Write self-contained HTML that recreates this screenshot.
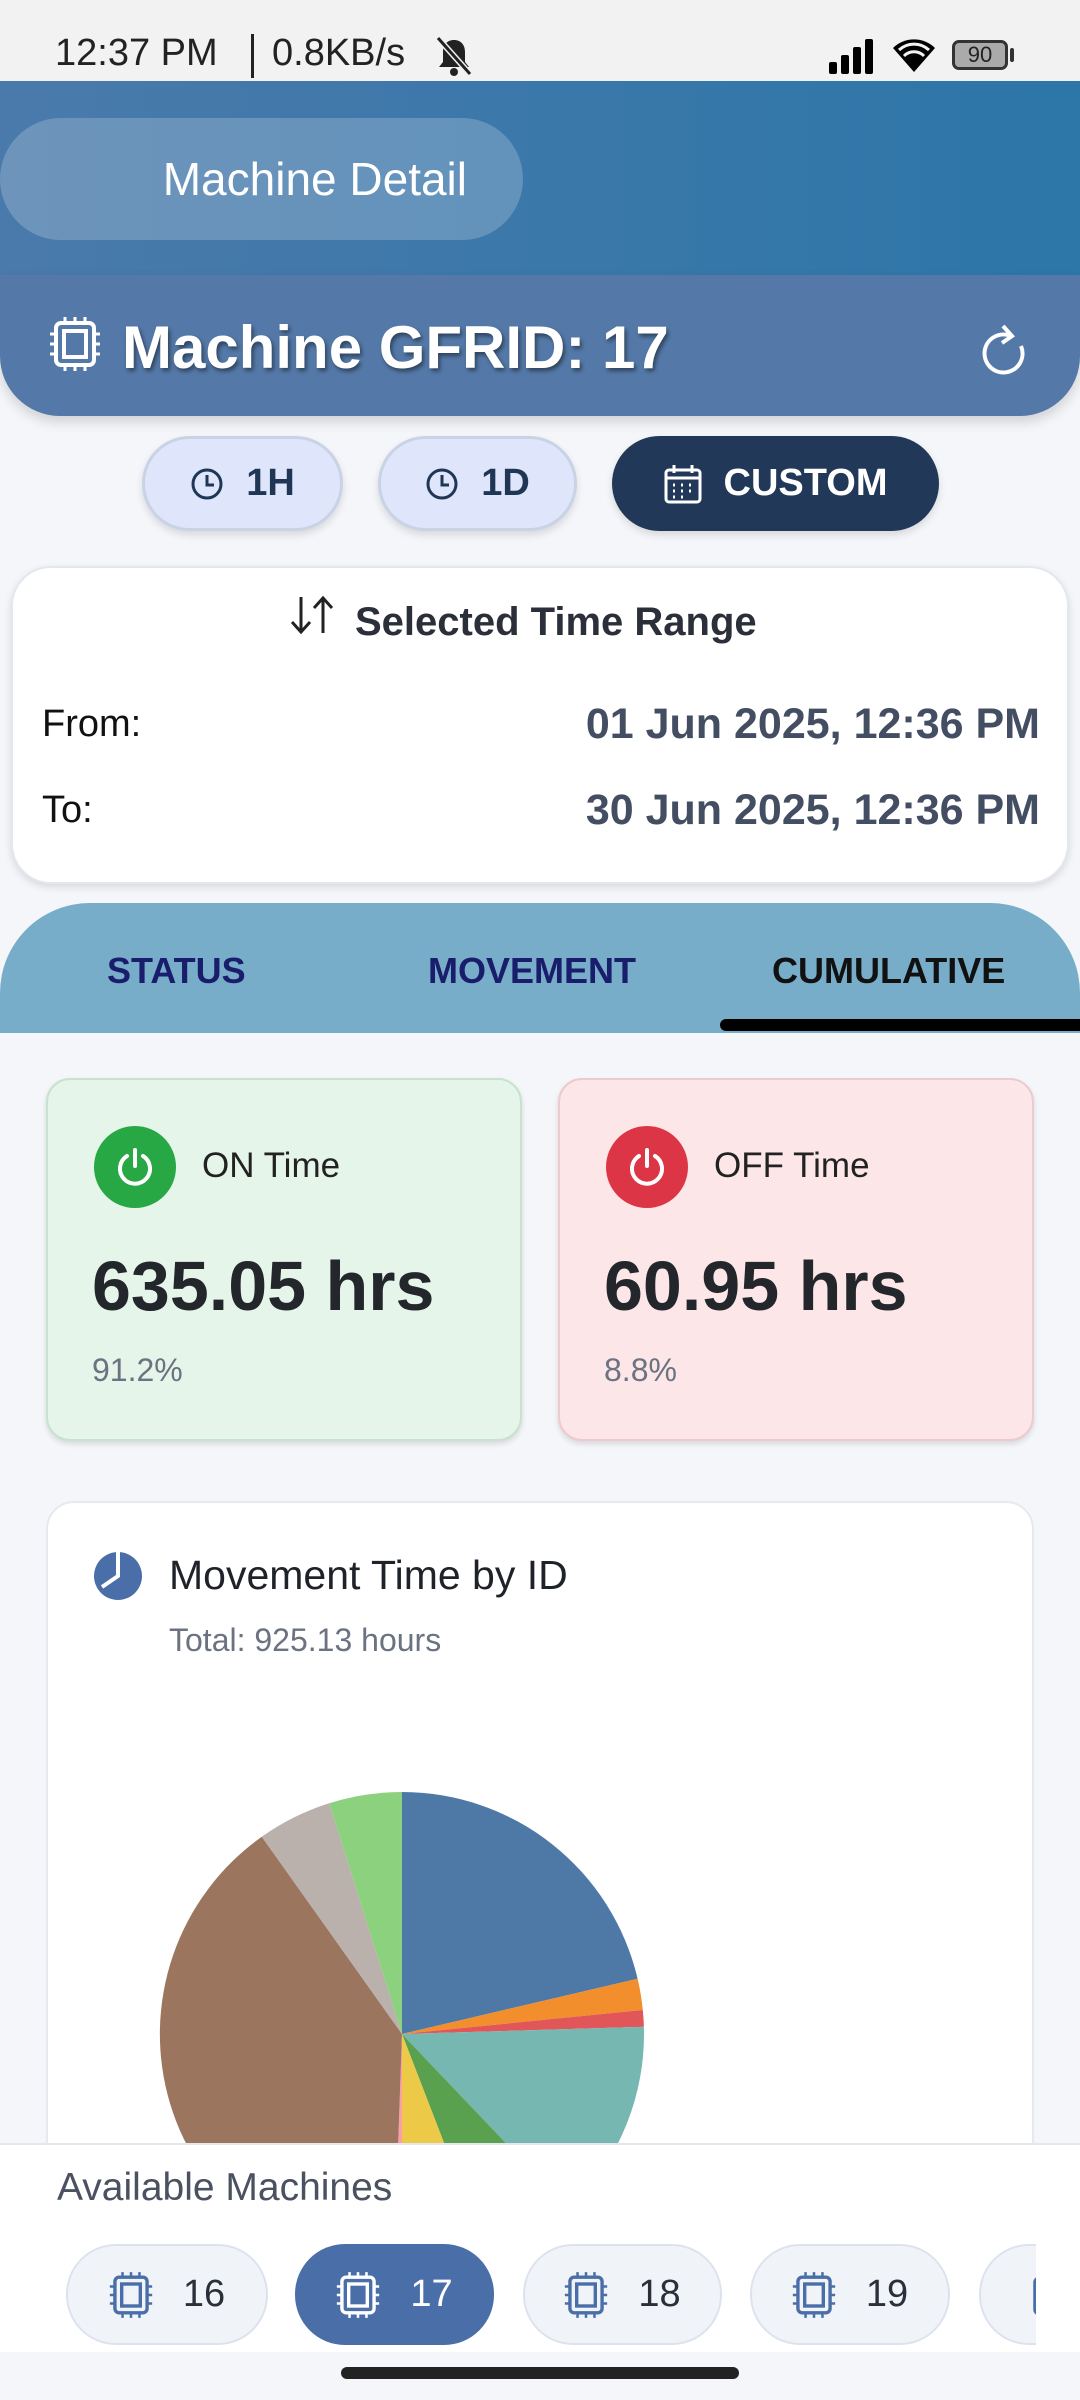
<!DOCTYPE html>
<html><head><meta charset="utf-8"><style>
*{margin:0;padding:0;box-sizing:border-box}
body{width:1080px;height:2400px;position:relative;overflow:hidden;background:#f4f6fa;font-family:"Liberation Sans",sans-serif;color:#1f2329}
.a{position:absolute}
.sb{top:0;left:0;width:1080px;height:81px;background:#f2f2f2}
.hd{top:81px;left:0;width:1080px;height:194px;background:linear-gradient(90deg,#4a7aab,#2c76a8)}
.pill{left:0;top:118px;width:523px;height:122px;border-radius:61px;background:rgba(255,255,255,.2);color:#fff;font-size:46px;line-height:122px;text-align:right;padding-right:56px}
.band{top:275px;left:0;width:1080px;height:141px;background:#5479a8;border-radius:0 0 60px 60px;box-shadow:0 6px 12px rgba(0,0,0,.15)}
.btn{top:436px;height:95px;border-radius:48px;background:#dfe6fb;border:3px solid #c9d3e6;font-weight:bold;font-size:38px;color:#1f3655;display:flex;align-items:center;justify-content:center;gap:22px;box-shadow:0 4px 8px rgba(0,0,0,.12)}
.card{left:11px;top:566px;width:1058px;height:318px;background:#fff;border-radius:40px;box-shadow:0 3px 8px rgba(0,0,0,.12);border:2px solid #e3e7ee}
.tabs{top:903px;left:0;width:1080px;height:130px;background:#77adc8;border-radius:90px 90px 0 0}
.tab{top:950px;font-weight:bold;font-size:36px;color:#1a1d6b}
.st{top:1078px;width:476px;height:363px;border-radius:24px;box-shadow:0 3px 6px rgba(0,0,0,.12)}
.ic{left:46px;top:46px;width:82px;height:82px;border-radius:50%}
</style></head><body>
<div class="a sb"></div>
<div class="a" style="left:55px;top:32px;font-size:38px;color:#222">12:37 PM</div>
<div class="a" style="left:251px;top:34px;width:3px;height:44px;background:#222"></div>
<div class="a" style="left:272px;top:32px;font-size:38px;color:#222">0.8KB/s</div>
<svg class="a" style="left:432px;top:36px" width="44" height="40" viewBox="0 0 44 40"><path d="M22 4c-7 0-11 5-11 12v10l-4 5h30l-4-5V16c0-7-4-12-11-12z" fill="#222"/><circle cx="22" cy="36" r="4" fill="#222"/><line x1="6" y1="2" x2="38" y2="38" stroke="#f2f2f2" stroke-width="6"/><line x1="6" y1="2" x2="38" y2="38" stroke="#222" stroke-width="3"/></svg>
<svg class="a" style="left:829px;top:38px" width="52" height="36"><rect x="0" y="24" width="8" height="12" rx="2"/><rect x="12" y="17" width="8" height="19" rx="2"/><rect x="24" y="9" width="8" height="27" rx="2"/><rect x="36" y="1" width="8" height="35" rx="2"/></svg>
<svg class="a" style="left:893px;top:36px" width="42" height="36" viewBox="0 0 42 36"><path d="M21 36L0 12a30 30 0 0 1 42 0z"/><path d="M6 14a22 22 0 0 1 30 0" stroke="#f2f2f2" stroke-width="3" fill="none"/><path d="M11 20a14 14 0 0 1 20 0" stroke="#f2f2f2" stroke-width="3" fill="none"/></svg>
<div class="a" style="left:952px;top:40px;width:56px;height:30px;border:3px solid #333;border-radius:7px;background:#aaa;font-size:22px;line-height:24px;text-align:center;color:#222">90</div>
<div class="a" style="left:1010px;top:48px;width:4px;height:14px;background:#333;border-radius:2px"></div>
<div class="a hd"></div>
<div class="a pill">Machine Detail</div>
<div class="a band"></div>
<svg class="a" style="left:49px;top:316px" width="52" height="56" viewBox="0 0 52 56" fill="none" stroke="#fff" stroke-width="4"><rect x="7" y="7" width="38" height="42" rx="5"/><rect x="15" y="15" width="22" height="26"/><path d="M16 1v6M26 1v6M36 1v6M16 49v6M26 49v6M36 49v6M1 18h6M1 28h6M1 38h6M45 18h6M45 28h6M45 38h6" stroke-width="3"/></svg>
<div class="a" style="left:122px;top:313px;font-size:60px;font-weight:bold;color:#fff;text-shadow:2px 3px 4px rgba(0,0,0,.45)">Machine GFRID: 17</div>
<svg class="a" style="left:981px;top:320px" width="46" height="56" viewBox="0 0 46 56" fill="none" stroke="#fff" stroke-width="4"><path d="M30 16A19 19 0 1 0 40 26"/><path d="M22 6l9 10-10 7"/></svg>
<div class="a btn" style="left:142px;width:201px"><svg width="34" height="34" viewBox="0 0 34 34" fill="none" stroke="#1f3655" stroke-width="3"><circle cx="17" cy="17" r="14"/><path d="M17 8v10h7"/></svg>1H</div>
<div class="a btn" style="left:378px;width:199px"><svg width="34" height="34" viewBox="0 0 34 34" fill="none" stroke="#1f3655" stroke-width="3"><circle cx="17" cy="17" r="14"/><path d="M17 8v10h7"/></svg>1D</div>
<div class="a btn" style="left:612px;width:327px;background:#213858;border:none;color:#fff"><svg width="38" height="40" viewBox="0 0 38 40" fill="none" stroke="#fff" stroke-width="3"><rect x="2" y="6" width="34" height="32" rx="3"/><path d="M2 14h34M10 1v8M28 1v8"/><path d="M9 21h2M17 21h2M25 21h2M9 27h2M17 27h2M25 27h2M9 33h2M17 33h2" stroke-width="3"/></svg>CUSTOM</div>
<div class="a card"></div>
<svg class="a" style="left:289px;top:593px" width="48" height="44" viewBox="0 0 48 44" fill="none" stroke="#222" stroke-width="3"><path d="M12 4v34M3 29l9 10 9-10M34 40V6M25 15l9-10 9 10"/></svg>
<div class="a" style="left:355px;top:600px;font-size:40px;font-weight:bold;color:#2a2f3a">Selected Time Range</div>
<div class="a" style="left:42px;top:703px;font-size:38px;color:#111">From:</div>
<div class="a" style="right:40px;top:700px;font-size:43px;font-weight:bold;color:#444e63">01 Jun 2025, 12:36 PM</div>
<div class="a" style="left:42px;top:789px;font-size:38px;color:#111">To:</div>
<div class="a" style="right:40px;top:786px;font-size:43px;font-weight:bold;color:#444e63">30 Jun 2025, 12:36 PM</div>
<div class="a tabs"></div>
<div class="a tab" style="left:107px">STATUS</div>
<div class="a tab" style="left:428px">MOVEMENT</div>
<div class="a tab" style="left:772px;color:#111">CUMULATIVE</div>
<div class="a" style="left:720px;top:1019px;width:370px;height:12px;background:#000;border-radius:6px"></div>
<div class="a st" style="left:46px;background:#e5f5e9;border:2px solid #c6e3cd">
<div class="a ic" style="background:#28a745"></div>
<svg class="a" style="left:66px;top:66px" width="42" height="42" viewBox="0 0 42 42" fill="none" stroke="#fff" stroke-width="4" stroke-linecap="round"><path d="M13 10a15 15 0 1 0 16 0"/><path d="M21 4v16"/></svg>
<div class="a" style="left:154px;top:66px;font-size:35px;color:#222">ON Time</div>
<div class="a" style="left:44px;top:166px;font-size:70px;font-weight:bold;color:#23262b">635.05 hrs</div>
<div class="a" style="left:44px;top:272px;font-size:32px;color:#6b7280">91.2%</div>
</div>
<div class="a st" style="left:558px;background:#fce6e8;border:2px solid #eec9cd">
<div class="a ic" style="background:#dc3545"></div>
<svg class="a" style="left:66px;top:66px" width="42" height="42" viewBox="0 0 42 42" fill="none" stroke="#fff" stroke-width="4" stroke-linecap="round"><path d="M13 10a15 15 0 1 0 16 0"/><path d="M21 4v16"/></svg>
<div class="a" style="left:154px;top:66px;font-size:35px;color:#222">OFF Time</div>
<div class="a" style="left:44px;top:166px;font-size:70px;font-weight:bold;color:#23262b">60.95 hrs</div>
<div class="a" style="left:44px;top:272px;font-size:32px;color:#6b7280">8.8%</div>
</div>
<div class="a" style="left:46px;top:1501px;width:988px;height:700px;background:#fff;border-radius:28px;border:2px solid #e6e9ef"></div>
<svg class="a" style="left:93px;top:1551px" width="50" height="50" viewBox="0 0 50 50"><circle cx="25" cy="25" r="24" fill="#4a6fa8"/><path d="M25 1v24L9 36" stroke="#fff" stroke-width="4" fill="none"/></svg>
<div class="a" style="left:169px;top:1552px;font-size:41px;color:#1f2329">Movement Time by ID</div>
<div class="a" style="left:169px;top:1622px;font-size:32px;color:#6b7280">Total: 925.13 hours</div>
<svg class="a" style="left:0;top:0" width="1080" height="2400"><g transform="translate(402,2034)">
<path d="M0 0L0 -242A242 242 0 0 1 235.6 -55.3Z" fill="#4e79a7"/>
<path d="M0 0L235.6 -55.3A242 242 0 0 1 240.8 -24Z" fill="#f28e2b"/>
<path d="M0 0L240.8 -24A242 242 0 0 1 241.9 -7.2Z" fill="#e15759"/>
<path d="M0 0L241.9 -7.2A242 242 0 0 1 166.9 175.3Z" fill="#76b7b2"/>
<path d="M0 0L166.9 175.3A242 242 0 0 1 87.1 225.8Z" fill="#59a14f"/>
<path d="M0 0L87.1 225.8A242 242 0 0 1 0 242Z" fill="#edc948"/>
<path d="M0 0L0 242A242 242 0 0 1 -8.4 241.9Z" fill="#ff9da7"/>
<path d="M0 0L-8.4 241.9A242 242 0 0 1 -140.2 -197.3Z" fill="#9c755f"/>
<path d="M0 0L-140.2 -197.3A242 242 0 0 1 -72.8 -230.8Z" fill="#bab0ac"/>
<path d="M0 0L-72.8 -230.8A242 242 0 0 1 0 -242Z" fill="#8cd17d"/>
</g></svg>
<div class="a" style="left:0;top:2143px;width:1080px;height:257px;background:#fff;border-top:2px solid #e3e7ee"></div>
<div class="a" style="left:57px;top:2166px;font-size:39px;color:#4a5160">Available Machines</div>
<div class="a" style="left:0;top:2352px;width:1080px;height:48px;background:#f4f6fa"></div>
<div class="a" style="left:341px;top:2367px;width:398px;height:12px;background:#222;border-radius:6px"></div>
<div style="position:absolute;left:0;top:0;width:1036px;height:2400px;overflow:hidden;pointer-events:none">
<div class="a" style="left:66px;top:2244px;width:202px;height:101px;border-radius:50px;background:#f0f3f8;border:2px solid #dde3ee;display:flex;align-items:center;justify-content:center;gap:30px;font-size:38px;color:#2a2f3a"><svg width="44" height="48" viewBox="0 0 52 56" fill="none" stroke="#4a6fa8" stroke-width="4"><rect x="7" y="7" width="38" height="42" rx="5"/><rect x="15" y="15" width="22" height="26"/><path d="M16 1v6M26 1v6M36 1v6M16 49v6M26 49v6M36 49v6M1 18h6M1 28h6M1 38h6M45 18h6M45 28h6M45 38h6" stroke-width="3"/></svg>16</div>
<div class="a" style="left:295px;top:2244px;width:199px;height:101px;border-radius:50px;background:#4a6fa8;display:flex;align-items:center;justify-content:center;gap:30px;font-size:38px;color:#fff"><svg width="44" height="48" viewBox="0 0 52 56" fill="none" stroke="#fff" stroke-width="4"><rect x="7" y="7" width="38" height="42" rx="5"/><rect x="15" y="15" width="22" height="26"/><path d="M16 1v6M26 1v6M36 1v6M16 49v6M26 49v6M36 49v6M1 18h6M1 28h6M1 38h6M45 18h6M45 28h6M45 38h6" stroke-width="3"/></svg>17</div>
<div class="a" style="left:523px;top:2244px;width:199px;height:101px;border-radius:50px;background:#f0f3f8;border:2px solid #dde3ee;display:flex;align-items:center;justify-content:center;gap:30px;font-size:38px;color:#2a2f3a"><svg width="44" height="48" viewBox="0 0 52 56" fill="none" stroke="#4a6fa8" stroke-width="4"><rect x="7" y="7" width="38" height="42" rx="5"/><rect x="15" y="15" width="22" height="26"/><path d="M16 1v6M26 1v6M36 1v6M16 49v6M26 49v6M36 49v6M1 18h6M1 28h6M1 38h6M45 18h6M45 28h6M45 38h6" stroke-width="3"/></svg>18</div>
<div class="a" style="left:750px;top:2244px;width:200px;height:101px;border-radius:50px;background:#f0f3f8;border:2px solid #dde3ee;display:flex;align-items:center;justify-content:center;gap:30px;font-size:38px;color:#2a2f3a"><svg width="44" height="48" viewBox="0 0 52 56" fill="none" stroke="#4a6fa8" stroke-width="4"><rect x="7" y="7" width="38" height="42" rx="5"/><rect x="15" y="15" width="22" height="26"/><path d="M16 1v6M26 1v6M36 1v6M16 49v6M26 49v6M36 49v6M1 18h6M1 28h6M1 38h6M45 18h6M45 28h6M45 38h6" stroke-width="3"/></svg>19</div>
<div class="a" style="left:979px;top:2244px;width:200px;height:101px;border-radius:50px;background:#f0f3f8;border:2px solid #dde3ee;padding-left:48px;padding-top:26px"><svg width="44" height="48" viewBox="0 0 52 56" fill="none" stroke="#4a6fa8" stroke-width="4"><rect x="7" y="7" width="38" height="42" rx="5"/><rect x="15" y="15" width="22" height="26"/></svg></div>
</div>
</body></html>
